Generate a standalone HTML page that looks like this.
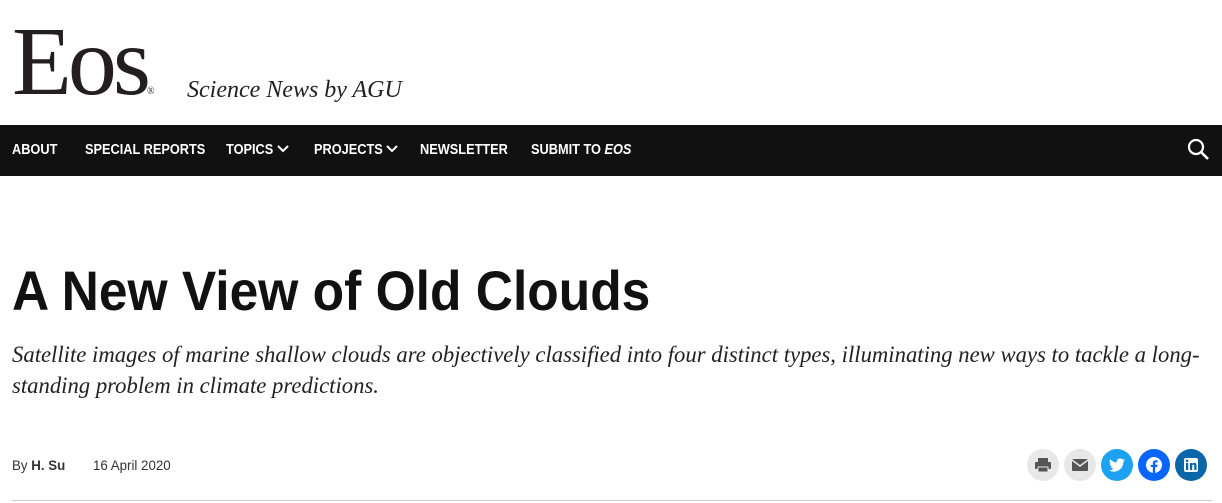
<!DOCTYPE html>
<html><head><style>
body{margin:0;width:1222px;height:503px;overflow:hidden;background:#fff;font-family:"Liberation Sans",sans-serif;position:relative}
.abs{position:absolute;white-space:nowrap}
.logo{left:12px;top:6px;font-family:"Liberation Serif",serif;font-size:98px;color:#231f20;letter-spacing:-4px;}
.tag{left:187px;top:77px;font-family:"Liberation Serif",serif;font-style:italic;font-size:24px;color:#231f20}
.nav{left:0;top:125px;width:1222px;height:51px;background:#111}
.nav span{position:absolute;top:17px;color:#fff;font-size:14.5px;font-weight:bold;transform:scaleX(0.88);transform-origin:left;white-space:nowrap}
h1{position:absolute;left:12px;top:258px;margin:0;font-size:56px;font-weight:bold;color:#111;transform:scaleX(0.92);transform-origin:left;white-space:nowrap}
.sub{left:12px;top:339px;font-family:"Liberation Serif",serif;font-style:italic;font-size:22.7px;color:#222;line-height:31px;white-space:normal;width:1200px}
.by{top:457px;font-size:14px;color:#333;transform:scaleX(0.95);transform-origin:left}
.c{position:absolute;top:449px;width:32px;height:32px;border-radius:50%}
</style></head><body>
<div class="abs logo">Eos<span style="font-size:10px;letter-spacing:0">®</span></div>
<div class="abs tag">Science News by AGU</div>
<div class="abs nav">
<span style="left:12px">ABOUT</span>
<span style="left:85px">SPECIAL REPORTS</span>
<span style="left:226px">TOPICS</span>
<span style="left:314px">PROJECTS</span>
<span style="left:420px">NEWSLETTER</span>
<span style="left:531px">SUBMIT TO <i>EOS</i></span>
<svg style="position:absolute;left:277px;top:19px" width="12" height="10"><path d="M1 2l5 5 5-5" stroke="#fff" stroke-width="2" fill="none"/></svg>
<svg style="position:absolute;left:386px;top:19px" width="12" height="10"><path d="M1 2l5 5 5-5" stroke="#fff" stroke-width="2" fill="none"/></svg>
<svg style="position:absolute;left:1187px;top:13px" width="24" height="24" viewBox="0 0 24 24"><circle cx="9" cy="9" r="7" stroke="#fff" stroke-width="2.2" fill="none"/><path d="M14 14l7 7" stroke="#fff" stroke-width="2.6"/></svg>
</div>
<h1>A New View of Old Clouds</h1>
<div class="abs sub">Satellite images of marine shallow clouds are objectively classified into four distinct types, illuminating new ways to tackle a long-standing problem in climate predictions.</div>
<div class="abs by" style="left:12px">By <b>H. Su</b></div>
<div class="abs by" style="left:93px">16 April 2020</div>
<div class="c" style="left:1027px;background:#e8e8e8"><svg width="32" height="32"><rect x="11" y="9" width="10" height="4" fill="#555"/><rect x="8" y="13" width="16" height="7" rx="1" fill="#555"/><rect x="11" y="18" width="10" height="5" fill="#555" stroke="#e8e8e8"/></svg></div>
<div class="c" style="left:1064px;background:#e8e8e8"><svg width="32" height="32"><rect x="8" y="10" width="16" height="12" rx="1" fill="#555"/><path d="M8 11l8 6 8-6" stroke="#e8e8e8" fill="none" stroke-width="1.5"/></svg></div>
<div class="c" style="left:1101px;background:#1da1f2"><svg width="32" height="32" viewBox="0 0 32 32"><path d="M24 11c-.6.3-1.2.4-1.9.5.7-.4 1.2-1 1.4-1.8-.6.4-1.3.6-2.1.8a3.3 3.3 0 0 0-5.6 3C13.1 13.4 10.7 12 9.1 10.1c-.9 1.5-.4 3.4 1 4.4-.5 0-1-.2-1.5-.4 0 1.6 1.1 3 2.6 3.3-.5.1-1 .2-1.5.1.4 1.3 1.7 2.3 3.1 2.3A6.6 6.6 0 0 1 8 21.1 9.3 9.3 0 0 0 22.3 13v-.4c.7-.5 1.2-1 1.7-1.6z" fill="#fff"/></svg></div>
<div class="c" style="left:1138px;background:#0866ff"><svg width="32" height="32"><circle cx="16" cy="16" r="8" fill="#fff"/><path d="M17.2 24v-6h2l.3-2.3h-2.3v-1.3c0-.6.2-1 1.1-1h1.3V11.3c-.3 0-1-.1-1.8-.1-1.8 0-3 1.1-3 3.1v1.7h-2V18h2v6z" fill="#0866ff"/></svg></div>
<div class="c" style="left:1175px;background:#0a66a8"><svg width="32" height="32"><rect x="9" y="9" width="14" height="14" rx="2" fill="#fff"/><rect x="11" y="14" width="2.2" height="7" fill="#0a66a8"/><circle cx="12.1" cy="11.8" r="1.3" fill="#0a66a8"/><path d="M15 14h2v1c.5-.8 1.3-1.2 2.3-1.2 1.7 0 2.2 1.1 2.2 2.7V21h-2.2v-4c0-.8-.2-1.4-1-1.4s-1.1.6-1.1 1.4v4H15z" fill="#0a66a8"/></svg></div>
<div style="position:absolute;left:12px;top:500px;width:1200px;height:1px;background:#ccc"></div>
</body></html>
